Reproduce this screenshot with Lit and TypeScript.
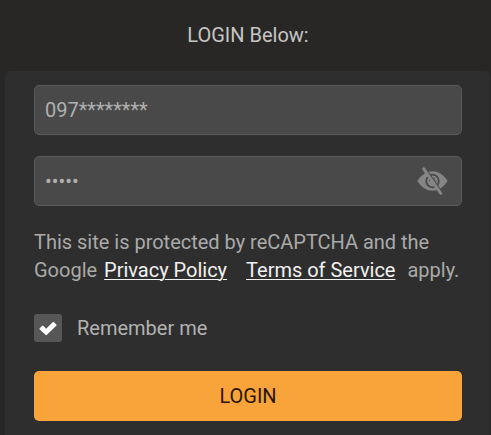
import { LitElement, html, css } from "lit";
import { customElement } from "lit/decorators.js";

@customElement("app-root")
export class AppRoot extends LitElement {
  static styles = css`
    :host {
      display: block;
      height: 435px;
      overflow: hidden;
      background: #282726;
      font-family: Roboto, "Liberation Sans", sans-serif;
      font-size: 20px;
      line-height: 28px;
      color: #aaaaaa;
    }
    * { box-sizing: border-box; }
    .title {
      height: 71px;
      padding-top: 21px;
      text-align: center;
      color: #c6c5c4;
      padding-left: 5px;
    }
    .card {
      height: 370px;
      margin: 0 1px 0 5px;
      padding: 14px 28px 0 29px;
      background: #2e2e2e;
      border-radius: 5px 5px 0 0;
    }
    .field {
      display: flex;
      align-items: center;
      justify-content: space-between;
      height: 50px;
      padding: 0 13px 0 10px;
      border: 1px solid #595959;
      border-radius: 5px;
      background: #494949;
      color: #b0b0b0;
    }
    .password { margin-top: 21px; }
    .eye { width: 32px; height: 30px; fill: #858585; }
    .notice { margin-top: 22px; white-space: nowrap; letter-spacing: -0.01px; }
    .row { display: flex; height: 28px; }
    a { color: #f2f2f2; text-decoration: underline; text-underline-offset: 2px; text-decoration-thickness: 1px; }
    .privacy { margin-left: 7px; }
    .terms { margin-left: 19px; }
    .apply { margin-left: 12px; }
    .remember { display: flex; align-items: center; gap: 15px; margin-top: 30px; height: 28px; color: #b2b2b2; }
    .box { display: flex; width: 28px; height: 28px; border-radius: 3px; background: #575757; }
    .box svg { width: 28px; height: 28px; fill: #fff; }
    .submit {
      display: block;
      width: 100%;
      height: 50px;
      margin-top: 29px;
      padding: 0;
      border: 0;
      border-radius: 5px;
      background: #f9a43a;
      color: #2a1400;
      font: inherit;
    }
  `;

  render() {
    return html`
      <div class="title"><span>LOGIN Below:</span></div>
      <div class="card">
        <div class="field"><span>097********</span></div>
        <div class="field password">
          <span>•••••</span>
          <svg class="eye" viewBox="0 0 32 30">
            <path fill-rule="evenodd" d="M1.300 15Q7.500 5.200 16.500 5.200T31.700 15Q25.500 24.800 16.500 24.800T1.300 15ZM16.500 7.800a7.200 7.200 0 1 0 0 14.400a7.200 7.200 0 1 0 0-14.400Z"/>
            <circle cx="16.500" cy="15" r="5.400"/>
            <path d="M13.700 14.500Q13.900 12.300 16.200 12.100" fill="none" stroke="#494949" stroke-width="1.300" stroke-linecap="round"/>
            <path d="M18 11.500v3l2.500 1" fill="none" stroke="#555" stroke-width="1.200"/>
            <path d="M9.400 2.500L26.400 27" fill="none" stroke="#494949" stroke-width="1.600"/>
            <path d="M7.800 2.800L24.800 27.300" fill="none" stroke="#858585" stroke-width="3" stroke-linecap="round"/>
          </svg>
        </div>
        <div class="notice">
          <div class="row"><span>This site is protected by reCAPTCHA and the</span></div>
          <div class="row">
            <span>Google</span><a class="privacy">Privacy Policy</a><a class="terms">Terms of Service</a><span class="apply">apply.</span>
          </div>
        </div>
        <div class="remember">
          <span class="box"><svg viewBox="0 0 28 28"><path d="M5.700 14.200L8 11.900Q8.700 11.300 9.400 11.900L12.200 14.700L18.700 8.200Q19.400 7.600 20.100 8.200L22.300 10.400Q22.900 11.100 22.300 11.800L12.900 20.700Q12.200 21.300 11.500 20.700L5.700 15.500Q5.100 14.900 5.700 14.200Z"/></svg></span>
          <span>Remember me</span>
        </div>
        <button class="submit">LOGIN</button>
      </div>
    `;
  }
}
